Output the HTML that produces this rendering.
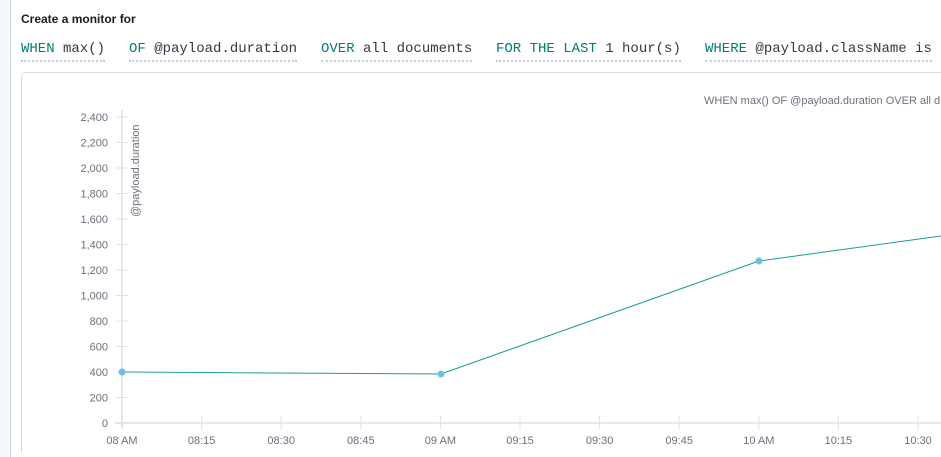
<!DOCTYPE html>
<html style="overflow:hidden"><head><style>
body{margin:0;width:941px;height:457px;overflow:hidden;background:#fff;font-family:"Liberation Sans",sans-serif;position:relative}
.side{position:absolute;left:0;top:0;width:10px;height:457px;background:#f5f7fa;border-right:1px solid #d3dae6}
.title{position:absolute;left:21px;top:12px;font-size:12px;font-weight:bold;color:#1a1c21}
.q{position:absolute;top:41px;font-family:"Liberation Mono",monospace;font-size:14px;color:#343741;white-space:nowrap;border-bottom:2px dotted #c5ccd8;padding-bottom:3px}
.q b{font-weight:normal;color:#017d73}
.box{position:absolute;left:21px;top:72px;width:940px;height:380px;border:1px solid #d3dae6;border-bottom:none;border-radius:5px 0 0 0}
</style></head><body>
<div class="side"></div>
<div class="title">Create a monitor for</div>
<div class="q" style="left:21px"><b>WHEN</b> max()</div>
<div class="q" style="left:129px"><b>OF</b> @payload.duration</div>
<div class="q" style="left:321px"><b>OVER</b> all documents</div>
<div class="q" style="left:496px"><b>FOR THE LAST</b> 1 hour(s)</div>
<div class="q" style="left:705px"><b>WHERE</b> @payload.className is</div>
<div class="box"></div>
<svg width="941" height="457" style="position:absolute;left:0;top:0" font-family="Liberation Sans,sans-serif">
<text x="704" y="104" font-size="11" fill="#69707d">WHEN max() OF @payload.duration OVER all d</text>
<g stroke="#e8e8e8" stroke-width="1">
<line x1="122" y1="110" x2="122" y2="428" stroke-width="2"/>
<line x1="115" y1="423" x2="941" y2="423" stroke-width="2"/>
</g>
<g font-size="11" fill="#69707d" text-anchor="end" stroke="#e0e0e0">
<g id="y"></g>
</g>
<text transform="translate(139,217) rotate(-90)" font-size="11" fill="#69707d">@payload.duration</text>
<polyline points="122,372 441,374 759,261 941,236" fill="none" stroke="#1a9c94" stroke-width="1"/>
<g fill="#6dc3df"><circle cx="122" cy="372" r="3.5"/><circle cx="441" cy="374" r="3.5"/><circle cx="759" cy="261" r="3.5"/></g>
<g id="x" font-size="11" fill="#69707d" text-anchor="middle"></g>
</svg>
<script>
var s='';var lab=['0','200','400','600','800','1,000','1,200','1,400','1,600','1,800','2,000','2,200','2,400'];
for(var i=0;i<13;i++){var y=423-i*25.5;s+='<line x1="116" x2="128" y1="'+y+'" y2="'+y+'" stroke="#e0e0e0"/><text x="108" y="'+(y+4)+'" stroke="none">'+lab[i]+'</text>';}
document.getElementById('y').innerHTML=s;
var xl=['08 AM','08:15','08:30','08:45','09 AM','09:15','09:30','09:45','10 AM','10:15','10:30'];var t='';
for(var j=0;j<11;j++){var x=122+j*79.6;t+='<line x1="'+x+'" x2="'+x+'" y1="416" y2="430" stroke="#e0e0e0"/><text x="'+x+'" y="444">'+xl[j]+'</text>';}
document.getElementById('x').innerHTML=t;
</script>
</body></html>
